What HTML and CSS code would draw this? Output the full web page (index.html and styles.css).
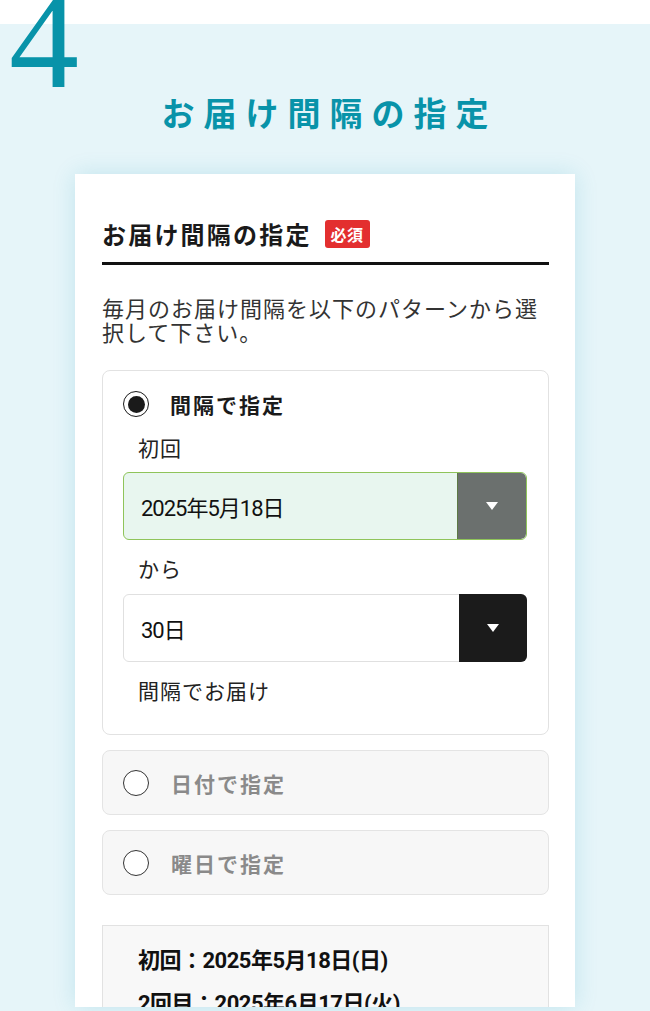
FILE: index.html
```html
<!DOCTYPE html>
<html lang="ja">
<head>
<meta charset="utf-8">
<title>お届け間隔の指定</title>
<link rel="stylesheet" href="styles.css">
</head>
<body>
<div class="step-num">4</div>
<div class="band">
  <h2 class="title">お届け間隔の指定</h2>
  <div class="card">
    <div class="card-head">
      <h3 class="card-title">お届け間隔の指定</h3>
      <span class="badge">必須</span>
    </div>
    <p class="desc">毎月のお届け間隔を以下のパターンから選択して下さい。</p>

    <div class="opt opt-active">
      <div class="opt-row">
        <span class="radio radio-on"></span>
        <span class="opt-label">間隔で指定</span>
      </div>
      <div class="sub-label first">初回</div>
      <div class="select select-filled">
        <span class="select-value">2025年5月18日</span>
        <span class="select-btn"><span class="caret"></span></span>
      </div>
      <div class="sub-label">から</div>
      <div class="select select-plain">
        <span class="select-value">30日</span>
        <span class="select-btn"><span class="caret"></span></span>
      </div>
      <div class="sub-label">間隔でお届け</div>
    </div>

    <div class="opt opt-off">
      <span class="radio"></span>
      <span class="opt-label">日付で指定</span>
    </div>
    <div class="opt opt-off">
      <span class="radio"></span>
      <span class="opt-label">曜日で指定</span>
    </div>

    <div class="summary">
      <div class="summary-line">初回：2025年5月18日(日)</div>
      <div class="summary-line">2回目：2025年6月17日(火)</div>
    </div>
  </div>
</div>
</body>
</html>
```

FILE: styles.css
```css
html, body {
  margin: 0;
  padding: 0;
}
body {
  position: relative;
  background: #ffffff;
  font-family: "Noto Sans CJK JP", "Noto Sans", sans-serif;
  color: #1a1a1a;
  overflow: hidden;
  height: 1011px;
}
.step-num {
  position: absolute;
  left: 9px;
  top: -30px;
  font-family: "Liberation Serif", serif;
  font-size: 140px;
  line-height: 1;
  color: #0893a9;
  z-index: 2;
}
.band {
  margin-top: 24px;
  background: #e6f5f9;
  height: 987px;
  padding-top: 68px;
  box-sizing: border-box;
}
.title {
  margin: 0;
  text-align: center;
  font-size: 33px;
  line-height: 40px;
  font-weight: 700;
  letter-spacing: 9px;
  padding-left: 9px;
  color: #0893a9;
}
.card {
  width: 500px;
  height: 833px;
  margin: 42px auto 0;
  background: #ffffff;
  box-shadow: 0 0 22px rgba(0, 150, 180, 0.16);
  padding: 44px 26px 0 27px;
  box-sizing: border-box;
  overflow: hidden;
}
.card-head {
  display: flex;
  align-items: center;
  gap: 13px;
  padding-bottom: 12px;
  border-bottom: 3px solid #111111;
}
.card-title {
  margin: 0;
  font-size: 24px;
  line-height: 32px;
  font-weight: 700;
  letter-spacing: 2.2px;
  color: #1a1a1a;
}
.badge {
  display: flex;
  align-items: center;
  justify-content: center;
  width: 45px;
  height: 28px;
  background: #e32f2f;
  color: #ffffff;
  border-radius: 3px;
  font-size: 16px;
  font-weight: 700;
  letter-spacing: 0.5px;
}
.desc {
  margin: 30px 0 0;
  font-size: 22px;
  line-height: 24px;
  letter-spacing: 1px;
  color: #333333;
}
.opt {
  border: 1px solid #e2e2e2;
  border-radius: 8px;
  box-sizing: border-box;
}
.opt-active {
  margin-top: 27px;
  padding: 20px 21px 30px 20px;
  background: #ffffff;
}
.opt-row {
  display: flex;
  align-items: center;
  gap: 21px;
  height: 26px;
}
.radio {
  flex: none;
  width: 26px;
  height: 26px;
  border: 1.5px solid #333333;
  border-radius: 50%;
  box-sizing: border-box;
  background: #ffffff;
  display: flex;
  align-items: center;
  justify-content: center;
}
.radio-on {
  border-color: #1a1a1a;
}
.radio-on::after {
  content: "";
  width: 17px;
  height: 17px;
  border-radius: 50%;
  background: #1a1a1a;
}
.opt-label {
  font-size: 21px;
  line-height: 26px;
  font-weight: 700;
  letter-spacing: 2px;
  color: #1a1a1a;
}
.sub-label {
  margin: 14px 0 0 15px;
  font-size: 21px;
  line-height: 28px;
  letter-spacing: 1px;
  color: #222222;
}
.sub-label.first {
  margin-top: 16px;
}
.select {
  display: flex;
  align-items: stretch;
  height: 68px;
  margin-top: 12px;
  border: 1px solid #e0e0e0;
  border-radius: 6px;
  box-sizing: border-box;
  background: #ffffff;
}
.select-filled {
  margin-top: 11px;
  border-color: #8fc45a;
  background: #e8f6ef;
  overflow: hidden;
}
.select-value {
  flex: 1;
  display: flex;
  align-items: center;
  padding-left: 17px;
  font-family: Roboto, "Noto Sans CJK JP", sans-serif;
  font-size: 22px;
  letter-spacing: -1px;
  color: #111111;
}
.select-btn {
  flex: none;
  width: 68px;
  display: flex;
  align-items: center;
  justify-content: center;
  border-radius: 0 6px 6px 0;
}
.select-filled .select-btn {
  background: #6b706e;
  border-left: 1px solid #5d7a45;
  border-radius: 0 5px 5px 0;
}
.select-plain .select-btn {
  background: #1b1b1b;
  margin: -1px -1px -1px 0;
}
.caret {
  width: 0;
  height: 0;
  border-left: 6px solid transparent;
  border-right: 6px solid transparent;
  border-top: 8px solid #ffffff;
}
.opt-off {
  display: flex;
  align-items: center;
  gap: 22px;
  height: 65px;
  margin-top: 15px;
  padding: 0 20px;
  background: #f7f7f7;
  border-color: #e4e4e4;
}
.opt-off .opt-label {
  color: #8a8a8a;
}
.summary {
  margin-top: 30px;
  padding: 13px 35px 20px;
  background: #f8f8f8;
  border: 1px solid #e2e2e2;
}
.summary-line {
  font-family: Roboto, "Noto Sans CJK JP", sans-serif;
  font-size: 22px;
  line-height: 43px;
  font-weight: 700;
  letter-spacing: -0.5px;
  color: #111111;
}
```
